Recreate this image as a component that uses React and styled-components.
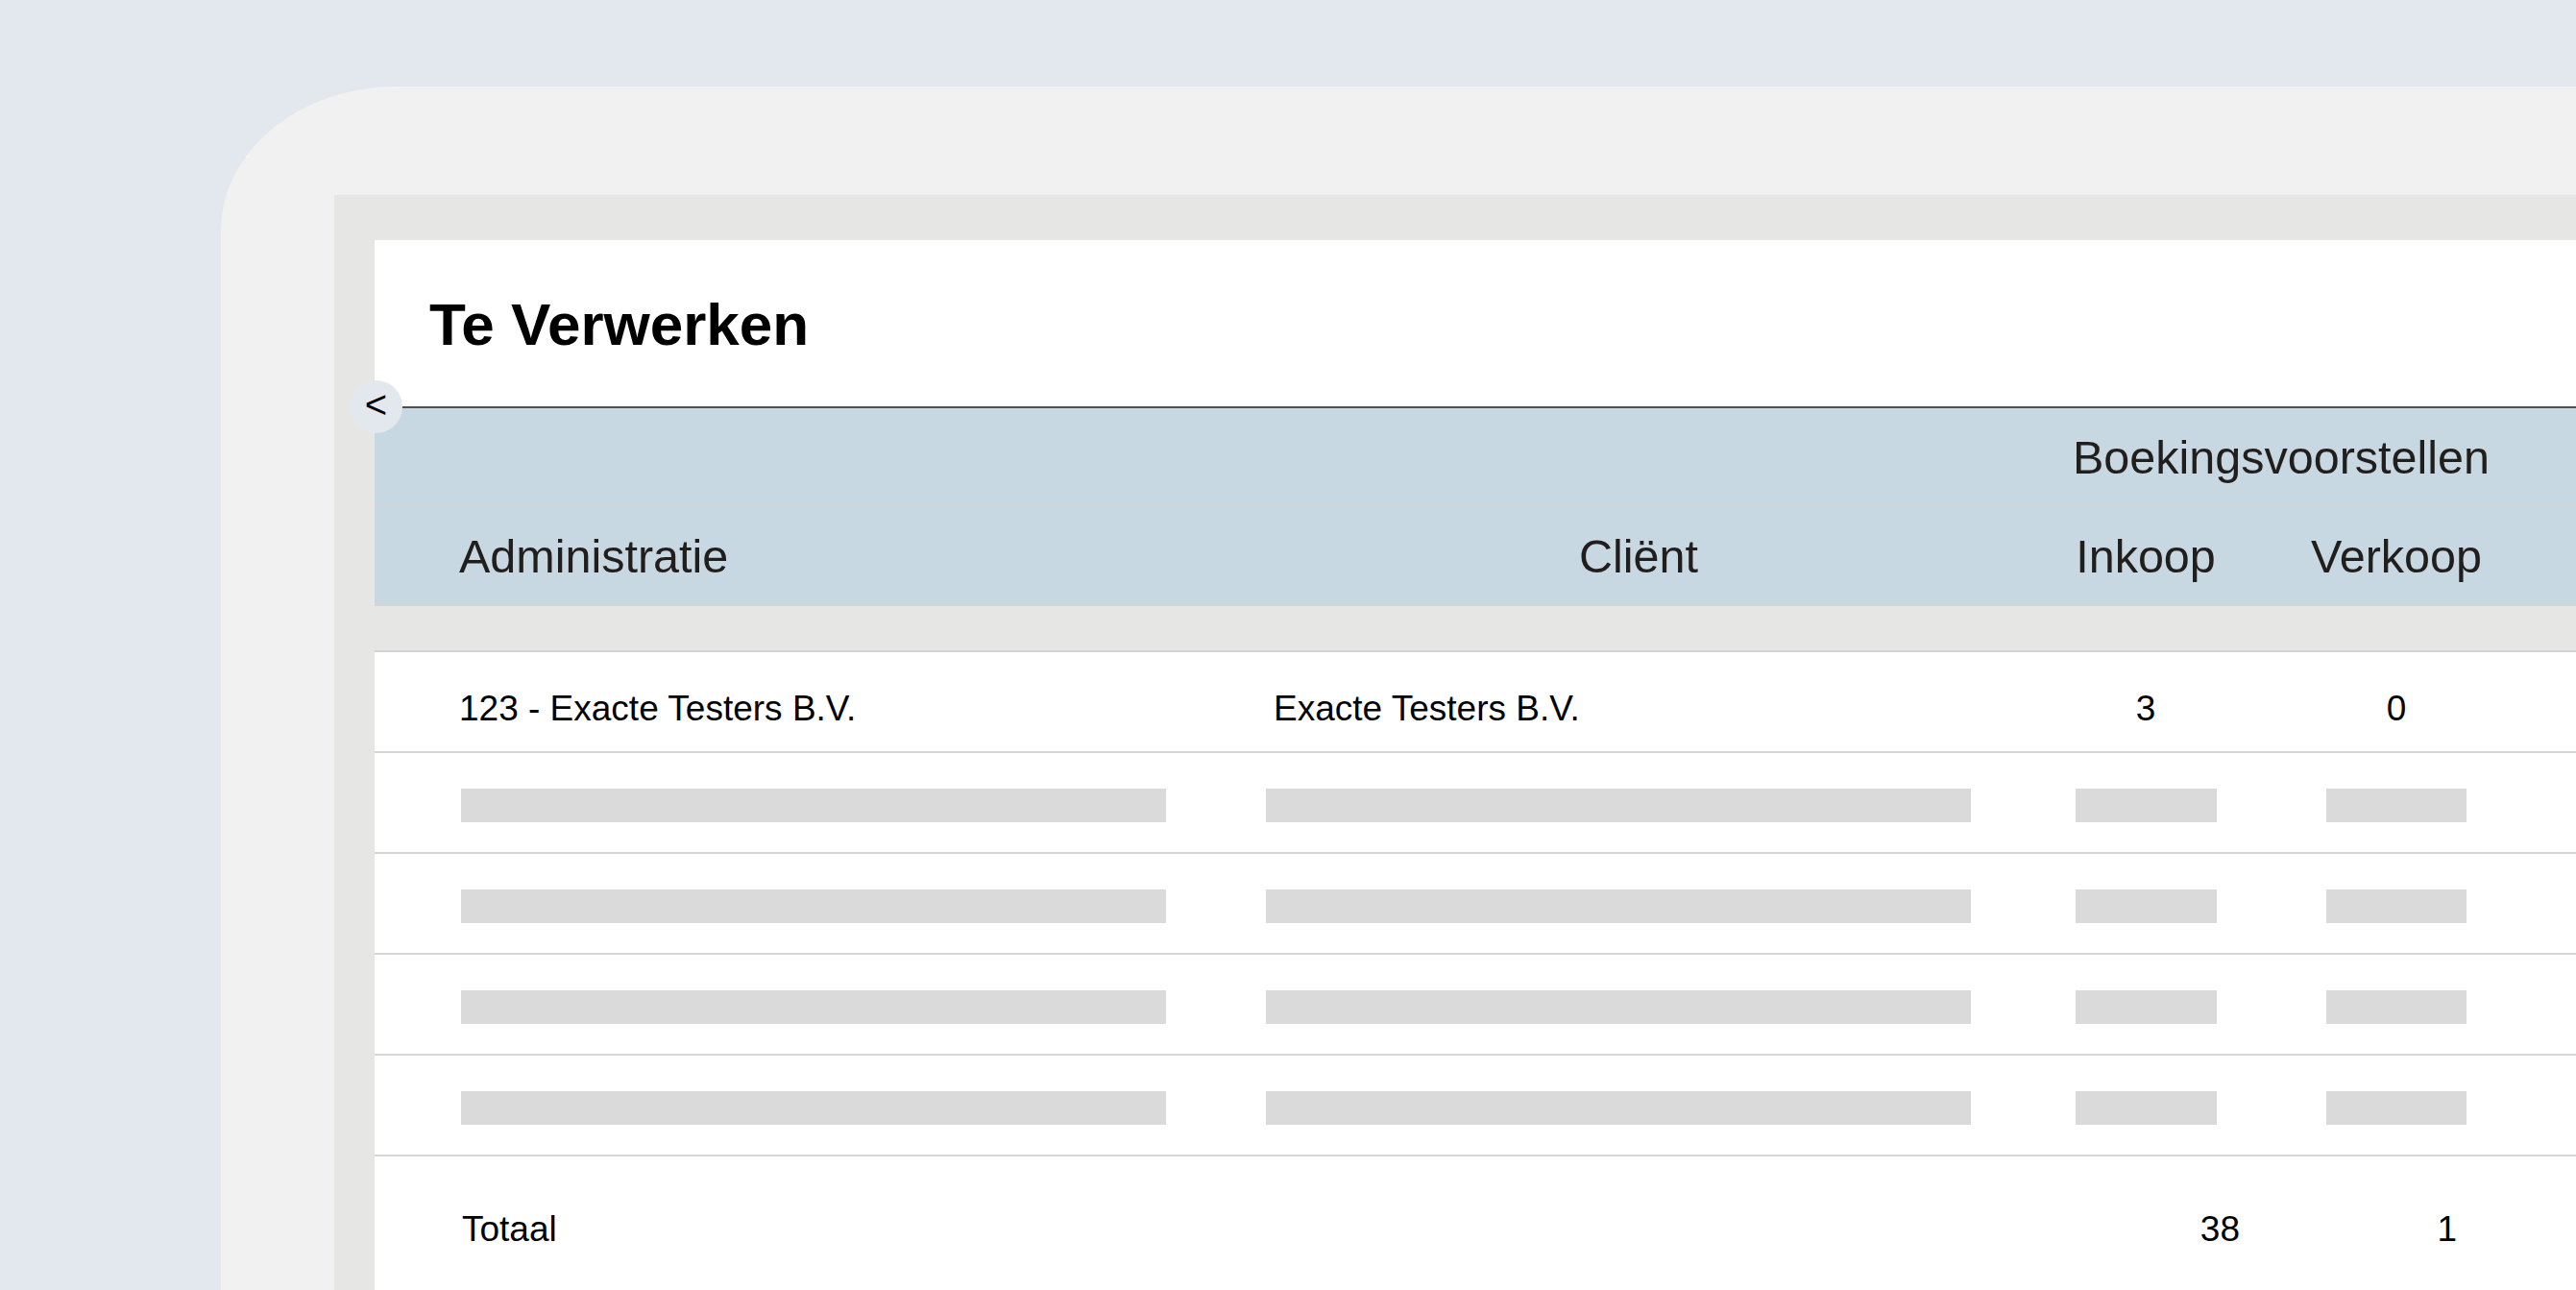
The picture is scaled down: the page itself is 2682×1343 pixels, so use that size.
import React from "react";
import styled, { createGlobalStyle } from "styled-components";

const GlobalStyle = createGlobalStyle`
  html, body {
    margin: 0;
    padding: 0;
    width: 2682px;
    height: 1343px;
    overflow: hidden;
    background: #e3e8ef;
    font-family: "Liberation Sans", Arial, sans-serif;
  }
  #root { height: 1343px; }
  * { box-sizing: border-box; }
`;

const COLS = "876px 880px 176px 346px 1fr";

const Page = styled.div`
  height: 1343px;
  padding: 90px 0 0 230px;
  display: flex;
`;

const DeviceFrame = styled.div`
  flex: 1;
  background: #f1f1f1;
  border-top-left-radius: 183px 150px;
  padding: 113px 0 0 118px;
  display: flex;
`;

const Panel = styled.div`
  flex: 1;
  background: #e6e6e4;
  padding: 47px 0 0 42px;
  display: flex;
  flex-direction: column;
  overflow: hidden;
`;

const HeaderCard = styled.section`
  flex-shrink: 0;
  background: #ffffff;
`;

const TitleBar = styled.div`
  height: 173px;
  padding: 57px 0 0 57px;
`;

const Title = styled.h1`
  margin: 0;
  font-size: 62px;
  line-height: 62px;
  font-weight: 700;
  color: #000;
`;

const HeadTable = styled.div`
  position: relative;
  background: #c7d8e2;
  border-top: 2px solid #4f4f4f;
`;

const Toggle = styled.button`
  position: absolute;
  left: -26px;
  top: -29px;
  width: 55px;
  height: 55px;
  border: none;
  border-radius: 50%;
  background: #e3e8ef;
  color: #000;
  font-family: "Liberation Sans", Arial, sans-serif;
  font-size: 40px;
  line-height: 55px;
  padding: 0 0 4px 0;
  display: flex;
  align-items: center;
  justify-content: center;
`;

const HeadRow = styled.div`
  display: grid;
  grid-template-columns: ${COLS};
  height: 103px;
  border-bottom: 2px solid #d2d4d5;
  align-items: center;
`;

const HeadCell = styled.div`
  grid-column: ${(p) => p.$span || "auto"};
  font-size: 48.5px;
  line-height: 48px;
  color: #211e1b;
  text-align: ${(p) => p.$align || "center"};
  padding-left: ${(p) => p.$pl || 0}px;
  white-space: nowrap;
`;

const Gap = styled.div`
  flex-shrink: 0;
  height: 46px;
`;

const BodyCard = styled.section`
  flex: 1 0 auto;
  background: #ffffff;
  border-top: 2px solid #d4d4d4;
`;

const Row = styled.div`
  display: grid;
  grid-template-columns: ${COLS};
  height: 105px;
  padding-top: 6px;
  border-bottom: 2px solid #d6d6d6;
  align-items: center;
`;

const Cell = styled.div`
  font-size: 37px;
  line-height: 37px;
  color: #000;
  padding-left: ${(p) => p.$pl || 0}px;
  padding-top: ${(p) => p.$pt || 0}px;
  white-space: nowrap;
  display: flex;
  justify-content: ${(p) => (p.$align === "center" ? "center" : "flex-start")};
`;

const Skeleton = styled.div`
  width: ${(p) => p.$w}px;
  height: 35px;
  background: #dadada;
`;

const FooterRow = styled.div`
  display: grid;
  grid-template-columns: 1756px 186px 226px 1fr;
  height: 146px;
  padding-top: 5px;
  align-items: center;
`;

const FooterCell = styled.div`
  font-size: 37px;
  line-height: 37px;
  color: #000;
  padding-left: ${(p) => p.$pl || 0}px;
  text-align: ${(p) => p.$align || "left"};
`;

const skeletonRows = [1, 2, 3, 4];

export default function App() {
  return (
    <>
      <GlobalStyle />
      <Page>
        <DeviceFrame>
          <Panel>
            <HeaderCard>
              <TitleBar>
                <Title>Te Verwerken</Title>
              </TitleBar>
              <HeadTable>
                <Toggle aria-label="Inklappen">&lt;</Toggle>
                <HeadRow>
                  <HeadCell $span="3 / 5" $align="left" $pl={12}>
                    Boekingsvoorstellen
                  </HeadCell>
                </HeadRow>
                <HeadRow>
                  <HeadCell $align="left" $pl={88}>
                    Administratie
                  </HeadCell>
                  <HeadCell>Cliënt</HeadCell>
                  <HeadCell>Inkoop</HeadCell>
                  <HeadCell>Verkoop</HeadCell>
                </HeadRow>
              </HeadTable>
            </HeaderCard>
            <Gap />
            <BodyCard>
              <Row>
                <Cell $pl={88} $pt={7}>123 - Exacte Testers B.V.</Cell>
                <Cell $pl={60} $pt={7}>Exacte Testers B.V.</Cell>
                <Cell $align="center" $pt={7}>3</Cell>
                <Cell $align="center" $pt={7}>0</Cell>
              </Row>
              {skeletonRows.map((r) => (
                <Row key={r}>
                  <Cell $pl={90}>
                    <Skeleton $w={734} />
                  </Cell>
                  <Cell $pl={52}>
                    <Skeleton $w={734} />
                  </Cell>
                  <Cell $align="center">
                    <Skeleton $w={147} />
                  </Cell>
                  <Cell $align="center">
                    <Skeleton $w={146} />
                  </Cell>
                </Row>
              ))}
              <FooterRow>
                <FooterCell $pl={91}>Totaal</FooterCell>
                <FooterCell $align="right">38</FooterCell>
                <FooterCell $align="right">1</FooterCell>
              </FooterRow>
            </BodyCard>
          </Panel>
        </DeviceFrame>
      </Page>
    </>
  );
}
